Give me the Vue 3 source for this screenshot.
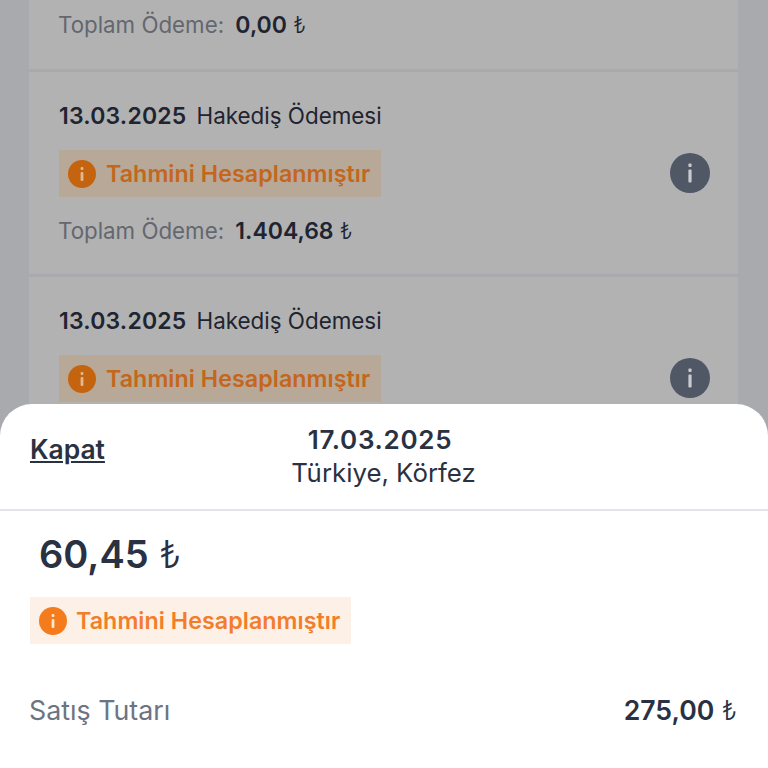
<script setup>
const payments = [
  { id: 1, date: '13.03.2025', title: 'Hakediş Ödemesi', total: '1.404,68' },
  // ikinci kartın alt kısmı sheet'in altında kalıyor
  { id: 2, date: '13.03.2025', title: 'Hakediş Ödemesi', total: null }
]
</script>

<template>
  <div class="screen">
    <div class="list">
      <div class="card card-first">
        <div class="total"><span>Toplam Ödeme:</span> <b>0,00</b> <i class="lira">₺</i></div>
      </div>
      <div v-for="p in payments" :key="p.id" class="card">
        <div class="card-info">
          <div class="heading"><b>{{ p.date }}</b><span>{{ p.title }}</span></div>
          <div class="estimate estimate-dim">
            <svg class="dot" viewBox="0 0 28 28"><circle cx="14" cy="14" r="14" fill="#c5640f" /><rect x="12.6" y="7" width="2.8" height="3" rx="1" fill="#e0b892" /><rect x="12.6" y="12" width="2.8" height="9" rx="1" fill="#e0b892" /></svg>
            <span>Tahmini Hesaplanmıştır</span>
          </div>
          <div v-if="p.total" class="total"><span>Toplam Ödeme:</span> <b>{{ p.total }}</b> <i class="lira">₺</i></div>
        </div>
        <svg class="more" viewBox="0 0 40 40"><circle cx="20" cy="20" r="20" fill="#505765" /><rect x="18.4" y="10.5" width="3.2" height="3.6" rx="1" fill="#c9cbd0" /><rect x="18.4" y="16.5" width="3.2" height="13" rx="1" fill="#c9cbd0" /></svg>
      </div>
    </div>

    <section class="sheet">
      <header class="sheet-head">
        <a class="close">Kapat</a>
        <div class="sheet-title">
          <b>17.03.2025</b>
          <span>Türkiye, Körfez</span>
        </div>
      </header>
      <div class="sheet-body">
        <div class="amount"><b>60,45</b> <i class="lira">₺</i></div>
        <div class="estimate estimate-sheet">
          <svg class="dot" viewBox="0 0 28 28"><circle cx="14" cy="14" r="14" fill="#f47c1c" /><rect x="12.6" y="7" width="2.8" height="3" rx="1" fill="#fde6d2" /><rect x="12.6" y="12" width="2.8" height="9" rx="1" fill="#fde6d2" /></svg>
          <span>Tahmini Hesaplanmıştır</span>
        </div>
        <div class="row">
          <span class="row-label">Satış Tutarı</span>
          <span class="row-value"><b>275,00</b> <i class="lira">₺</i></span>
        </div>
      </div>
    </section>
  </div>
</template>

<style scoped>
.screen {
  position: relative;
  width: 768px;
  height: 768px;
  overflow: hidden;
  background: #a9aaae;
  font-family: Inter, "Noto Sans", sans-serif;
  color: #2a3142;
}

.list {
  display: flex;
  flex-direction: column;
  gap: 3px;
  margin: -133px 30px 0 29px;
}

.card {
  display: flex;
  align-items: flex-start;
  justify-content: space-between;
  height: 202px;
  padding: 30px 28px 0 30px;
  box-sizing: border-box;
  background: #b2b2b2;
}

.card-first {
  align-items: flex-end;
  padding-bottom: 30px;
}

.card-info {
  display: flex;
  flex-direction: column;
  align-items: flex-start;
}

.heading {
  display: flex;
  gap: 10px;
  font-size: 22.4px;
  line-height: 28px;
  margin-bottom: 20px;
  color: #1f2431;
}

.heading b {
  font-size: 23px;
  font-weight: 600;
  letter-spacing: 0.2px;
}

.estimate {
  display: flex;
  align-items: center;
  gap: 10px;
  height: 47px;
  padding: 0 11px 0 9px;
  box-sizing: border-box;
  font-size: 23.26px;
  font-weight: 600;
  letter-spacing: 0.05px;
}

.estimate-dim {
  background: #b8a898;
  color: #c4661c;
}

.estimate-sheet {
  display: inline-flex;
  gap: 9px;
  margin-top: 20px;
  background: #fdf0e6;
  color: #f27d2a;
}

.dot {
  width: 28px;
  height: 28px;
}

.total {
  margin-top: 20px;
  font-size: 22.3px;
  line-height: 28px;
  color: #636770;
  margin-left: -1px;
}

.total b {
  margin-left: 5px;
  font-size: 23px;
  font-weight: 600;
  color: #1f2431;
}

.total .lira {
  color: #1f2431;
}

.lira {
  font-style: normal;
  font-weight: 300;
}

.more {
  width: 40px;
  height: 40px;
  margin-top: 51px;
}

.sheet {
  position: absolute;
  top: 404px;
  left: 0;
  right: 0;
  bottom: 0;
  background: #fff;
  border-radius: 32px 32px 0 0;
}

.sheet-head {
  position: relative;
  display: flex;
  justify-content: center;
  height: 107px;
  padding-top: 19px;
  box-sizing: border-box;
  border-bottom: 2px solid #e4e5ea;
}

.close {
  position: absolute;
  left: 30px;
  top: 29px;
  font-size: 26.4px;
  line-height: 32px;
  font-weight: 600;
  text-decoration: underline;
}

.sheet-title {
  display: flex;
  flex-direction: column;
  align-items: center;
  font-size: 25.8px;
  line-height: 33px;
  margin-left: -1px;
}

.sheet-title b {
  margin-right: 7px;
  font-size: 26px;
  font-weight: 600;
  letter-spacing: 0.7px;
}

.sheet-body {
  padding: 20px 31px 0 30px;
}

.amount {
  margin-left: 9px;
  font-size: 38px;
  line-height: 46px;
}

.amount b {
  font-weight: 600;
}

.row {
  display: flex;
  justify-content: space-between;
  align-items: center;
  margin-top: 49px;
  font-size: 26.6px;
  line-height: 34px;
}

.row-label {
  margin-left: -1px;
  font-size: 26.8px;
  color: #6d7481;
}

.row-value b {
  font-weight: 600;
}
</style>
